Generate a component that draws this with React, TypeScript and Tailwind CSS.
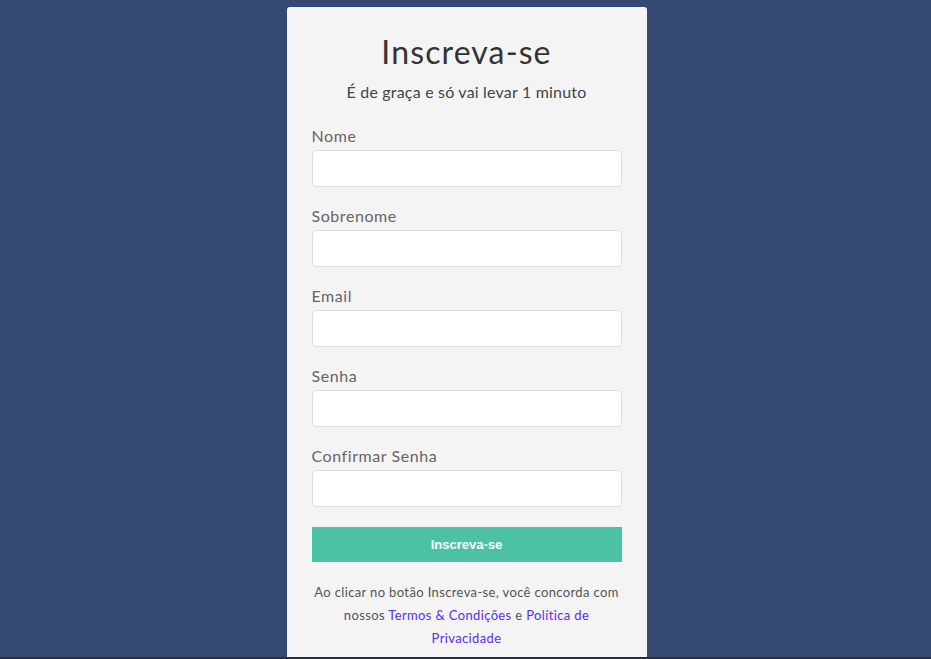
const FIELDS = ["Nome", "Sobrenome", "Email", "Senha", "Confirmar Senha"];

export default function App() {
  return (
    <div
      className="h-[659px] overflow-hidden bg-[#344a72] border-b-2 border-[#2a2e38] flex justify-center pt-[7px]"
      style={{ fontFamily: "Lato, 'Open Sans', sans-serif" }}
    >
      <div className="ml-[2px] w-[360px] h-[700px] bg-[#f4f4f4] rounded-t-[3px] px-[25px] pt-[25px]">
        <h1 className="text-center text-[32px] leading-[40px] tracking-[0.035em] text-[#333]">
          Inscreva-se
        </h1>
        <p className="mt-[8px] text-center text-[16px] leading-[24px] tracking-[0.012em] text-[#444]">
          É de graça e só vai levar 1 minuto
        </p>
        <form className="mt-[20px] flex flex-col gap-[17px]">
          {FIELDS.map((f) => (
            <div key={f} className="flex flex-col gap-[2px]">
              <label className="text-[16px] leading-[24px] tracking-[0.035em] text-[#666]">{f}</label>
              <input
                type={f.includes("Senha") ? "password" : f === "Email" ? "email" : "text"}
                className="h-[37px] w-full bg-white border border-[#dcdcdc] rounded-[4px] px-3 outline-none"
              />
            </div>
          ))}
        </form>
        <button
          className="mt-[20px] h-[35px] w-full bg-[#4bc2a3] text-white text-[13px] font-bold"
          style={{ fontFamily: "'Liberation Sans', Arial, sans-serif" }}
        >
          Inscreva-se
        </button>
        <p className="mt-[19px] text-center text-[13px] leading-[23px] tracking-[0.028em] text-[#555]">
          Ao clicar no botão Inscreva-se, você concorda com
          <br />
          nossos <a className="text-[#5a2bf5]">Termos &amp; Condições</a> e{" "}
          <a className="text-[#5a2bf5]">Política de</a>
          <br />
          <a className="text-[#5a2bf5]">Privacidade</a>
        </p>
      </div>
    </div>
  );
}
